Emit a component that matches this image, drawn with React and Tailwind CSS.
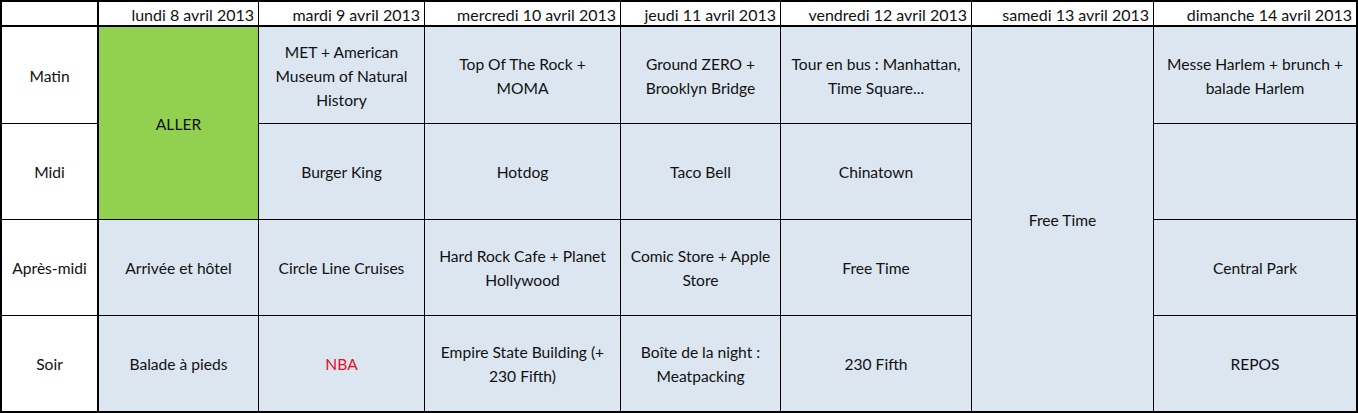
import React from 'react';

const days = [
  'lundi 8 avril 2013',
  'mardi 9 avril 2013',
  'mercredi 10 avril 2013',
  'jeudi 11 avril 2013',
  'vendredi 12 avril 2013',
  'samedi 13 avril 2013',
  'dimanche 14 avril 2013',
];

function Label({ children }) {
  return (
    <div className="flex items-center justify-center pt-px bg-white border-r border-black text-center">
      {children}
    </div>
  );
}

function Cell({ children, bg = 'bg-[#dce6f1]', className = '' }) {
  return (
    <div className={`flex items-center justify-center pt-px text-center ${bg} ${className}`}>
      <span>{children}</span>
    </div>
  );
}

export default function App() {
  return (
    <div
      className="grid grid-cols-[96px_159px_165px_195px_159px_190px_181px_202px] grid-rows-[24px_96px_95px_95px_95px] w-[1358px] h-[413px] gap-px p-[2px] bg-black text-[#111] text-[15.6px] leading-[24px]"
      style={{ fontFamily: 'Lato, "Liberation Sans", sans-serif' }}
    >
      {/* header row */}
      <div className="bg-white border-r border-b border-black" />
      {days.map((d) => (
        <div
          key={d}
          className="flex items-center justify-end pr-[4px] pt-[2px] bg-white border-b border-black text-[16px] leading-none whitespace-nowrap"
        >
          {d}
        </div>
      ))}

      {/* Matin */}
      <Label>Matin</Label>
      <Cell bg="bg-[#92d050]" className="row-span-2">ALLER</Cell>
      <Cell>
        MET + American
        <br />
        Museum of Natural
        <br />
        History
      </Cell>
      <Cell>
        Top Of The Rock +
        <br />
        MOMA
      </Cell>
      <Cell>
        Ground ZERO +
        <br />
        Brooklyn Bridge
      </Cell>
      <Cell>
        Tour en bus : Manhattan,
        <br />
        Time Square...
      </Cell>
      <Cell className="row-span-4">Free Time</Cell>
      <Cell>
        Messe Harlem + brunch +
        <br />
        balade Harlem
      </Cell>

      {/* Midi */}
      <Label>Midi</Label>
      <Cell>Burger King</Cell>
      <Cell>Hotdog</Cell>
      <Cell>Taco Bell</Cell>
      <Cell>Chinatown</Cell>
      <Cell />

      {/* Après-midi */}
      <Label>Après-midi</Label>
      <Cell>Arrivée et hôtel</Cell>
      <Cell>Circle Line Cruises</Cell>
      <Cell>
        Hard Rock Cafe + Planet
        <br />
        Hollywood
      </Cell>
      <Cell>
        Comic Store + Apple
        <br />
        Store
      </Cell>
      <Cell>Free Time</Cell>
      <Cell>Central Park</Cell>

      {/* Soir */}
      <Label>Soir</Label>
      <Cell>Balade à pieds</Cell>
      <Cell className="text-[#e8101e]">NBA</Cell>
      <Cell>
        Empire State Building (+
        <br />
        230 Fifth)
      </Cell>
      <Cell>
        Boîte de la night :
        <br />
        Meatpacking
      </Cell>
      <Cell>230 Fifth</Cell>
      <Cell>REPOS</Cell>
    </div>
  );
}
